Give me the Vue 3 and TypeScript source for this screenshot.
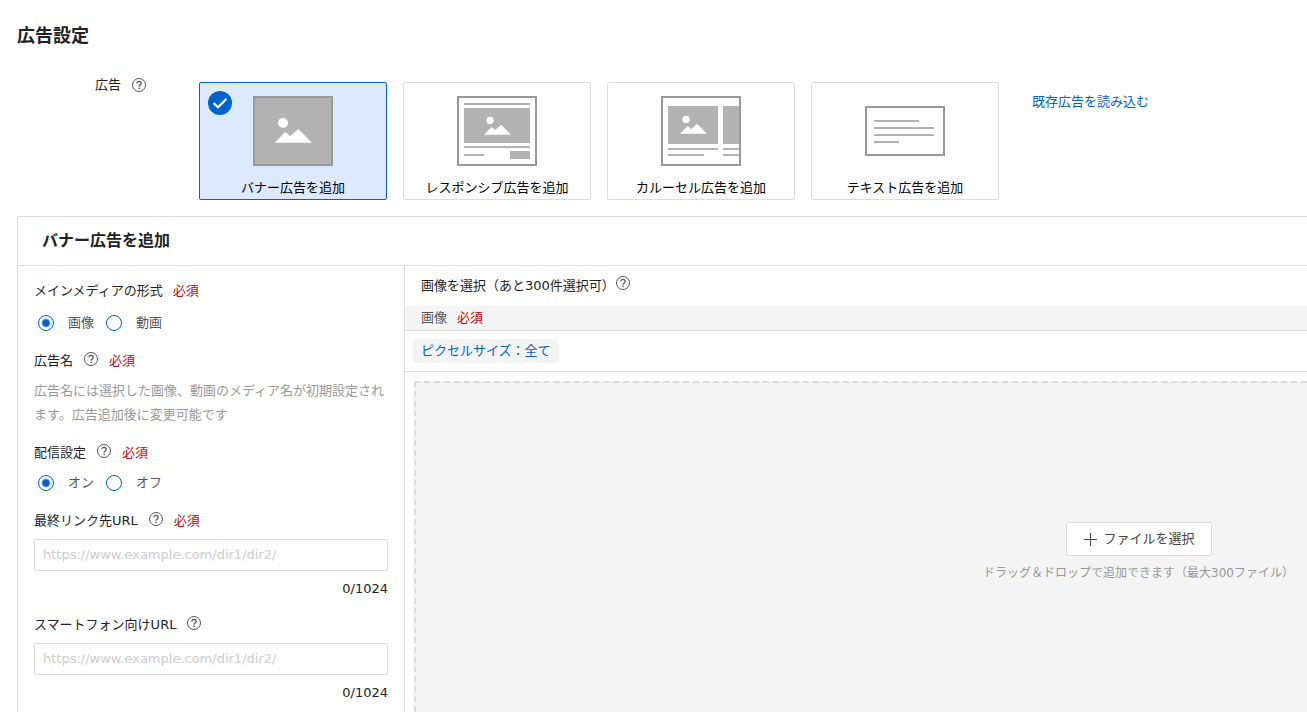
<script setup lang="ts">
import { ref } from 'vue'

interface AdType {
  id: string
  label: string
}

const adTypes: AdType[] = [
  { id: 'banner', label: 'バナー広告を追加' },
  { id: 'responsive', label: 'レスポンシブ広告を追加' },
  { id: 'carousel', label: 'カルーセル広告を追加' },
  { id: 'text', label: 'テキスト広告を追加' },
]

const selectedType = ref('banner')
const media = ref('image')
const delivery = ref('on')
const finalUrl = ref('')
const phoneUrl = ref('')
</script>

<template>
  <svg class="defs" aria-hidden="true">
    <symbol id="help" viewBox="0 0 16 16">
      <circle cx="8" cy="8" r="6.5" fill="none" stroke="#555" />
      <path d="M5.8 6.6c0-1.5 1-2.3 2.2-2.3s2.2.8 2.2 2.1c0 1.6-2.1 1.5-2.1 3.3" fill="none" stroke="#555" stroke-width="1.2" />
      <circle cx="8.1" cy="11.4" r=".8" fill="#555" />
    </symbol>
    <symbol id="scene" viewBox="0 0 38 26">
      <circle cx="9" cy="6" r="5.1" fill="#fff" />
      <path d="M.6 25.8 11.3 15l4.8 4.3L24.3 12 38 25.8z" fill="#fff" />
    </symbol>
  </svg>

  <main class="page">
    <h1 class="title">広告設定</h1>

    <section class="types">
      <div class="types-label">
        <span>広告</span>
        <button class="help" type="button" aria-label="ヘルプ"><svg><use href="#help" /></svg></button>
      </div>
      <div class="cards">
        <button
          v-for="type in adTypes"
          :key="type.id"
          type="button"
          class="card"
          :class="{ selected: selectedType === type.id }"
          :aria-pressed="selectedType === type.id"
          @click="selectedType = type.id"
        >
          <svg v-if="selectedType === type.id" class="badge" viewBox="0 0 24 24">
            <circle cx="12" cy="12" r="12" fill="#0062cc" />
            <path d="M5.6 12l4.4 4.3L18.4 7.9" fill="none" stroke="#fff" stroke-width="2.2" />
          </svg>
          <svg class="thumb" viewBox="0 0 80 70">
            <template v-if="type.id === 'banner'">
              <rect x="1" y="1" width="78" height="68" fill="#b2b2b2" stroke="#999" stroke-width="2" />
              <use href="#scene" x="21" y="21" width="38" height="26" />
            </template>
            <template v-else-if="type.id === 'responsive'">
              <rect x="1" y="1" width="78" height="68" fill="#fff" stroke="#999" stroke-width="2" />
              <path d="M7 7h66v2H7zM7 12h66v35H7zM7 50h66v2H7zM7 58h20v2H7zM53 55h20v8H53z" fill="#b2b2b2" />
              <use href="#scene" x="26.5" y="20" width="27.5" height="19" />
            </template>
            <template v-else-if="type.id === 'carousel'">
              <rect x="1" y="1" width="78" height="68" fill="#fff" stroke="#999" stroke-width="2" />
              <path d="M7 10h50v38H7zM62 10h16v38H62zM7 52h50v2H7zM62 52h16v2H62zM7 58h36v2H7zM62 58h16v2H62z" fill="#b2b2b2" />
              <use href="#scene" x="18.5" y="19" width="27.5" height="19" />
            </template>
            <template v-else>
              <rect x="1" y="11" width="78" height="48" fill="#fff" stroke="#999" stroke-width="2" />
              <path d="M9 24h45v2H9zM9 31h60v2H9zM9 38h60v2H9zM9 45h25v2H9z" fill="#b2b2b2" />
            </template>
          </svg>
          <span>{{ type.label }}</span>
        </button>
      </div>
      <a class="import" href="#">既存広告を読み込む</a>
    </section>

    <section class="panel">
      <h2 class="panel-title">バナー広告を追加</h2>
      <div class="panel-body">
        <form class="form" @submit.prevent>
          <div class="field media" role="radiogroup" aria-labelledby="media-label">
            <div class="field-label">
              <span id="media-label">メインメディアの形式</span>
              <span class="required">必須</span>
            </div>
            <div class="radios">
              <label><input v-model="media" type="radio" name="media" value="image" />画像</label>
              <label><input v-model="media" type="radio" name="media" value="video" />動画</label>
            </div>
          </div>

          <div class="field">
            <div class="field-label">
              <span>広告名</span>
              <button class="help" type="button" aria-label="ヘルプ"><svg><use href="#help" /></svg></button>
              <span class="required">必須</span>
            </div>
            <p class="note">広告名には選択した画像、動画のメディア名が初期設定されます。広告追加後に変更可能です</p>
          </div>

          <div class="field" role="radiogroup" aria-labelledby="delivery-label">
            <div class="field-label">
              <span id="delivery-label">配信設定</span>
              <button class="help" type="button" aria-label="ヘルプ"><svg><use href="#help" /></svg></button>
              <span class="required">必須</span>
            </div>
            <div class="radios">
              <label><input v-model="delivery" type="radio" name="delivery" value="on" />オン</label>
              <label><input v-model="delivery" type="radio" name="delivery" value="off" />オフ</label>
            </div>
          </div>

          <div class="urls">
            <div class="field">
              <div class="field-label">
                <label for="final-url">最終リンク先URL</label>
                <button class="help" type="button" aria-label="ヘルプ"><svg><use href="#help" /></svg></button>
                <span class="required">必須</span>
              </div>
              <input id="final-url" v-model="finalUrl" class="url" type="text" placeholder="https://www.example.com/dir1/dir2/" />
              <div class="count">{{ finalUrl.length }}/1024</div>
            </div>

            <div class="field">
              <div class="field-label">
                <label for="phone-url">スマートフォン向けURL</label>
                <button class="help" type="button" aria-label="ヘルプ"><svg><use href="#help" /></svg></button>
              </div>
              <input id="phone-url" v-model="phoneUrl" class="url" type="text" placeholder="https://www.example.com/dir1/dir2/" />
              <div class="count">{{ phoneUrl.length }}/1024</div>
            </div>
          </div>
        </form>

        <div class="picker">
          <div class="picker-title">
            <span>画像を選択（あと300件選択可）</span>
            <button class="help" type="button" aria-label="ヘルプ"><svg><use href="#help" /></svg></button>
          </div>
          <div class="band">
            <span>画像</span>
            <span class="required">必須</span>
          </div>
          <div class="filters">
            <button class="chip" type="button">ピクセルサイズ：全て</button>
          </div>
          <div class="dropzone">
            <div class="drop-content">
              <button class="choose" type="button">
                <svg viewBox="0 0 14 14"><path d="M7.5 1v13M1 7.5h13" stroke="#444" fill="none" /></svg>
                ファイルを選択
              </button>
              <p class="hint">ドラッグ＆ドロップで追加できます（最大300ファイル）</p>
            </div>
          </div>
        </div>
      </div>
    </section>
  </main>
</template>

<style>
body {
  margin: 0;
  background: #fff;
}
</style>

<style scoped>
* {
  box-sizing: border-box;
}
.defs {
  position: absolute;
  width: 0;
  height: 0;
}
.page {
  display: flex;
  flex-direction: column;
  min-height: 100vh;
  padding: 20px 0 0 17px;
  overflow: hidden;
  color: #222;
  font-family: "DejaVu Sans", "Noto Sans CJK JP", sans-serif;
  font-size: 13px;
  line-height: 24px;
}
button,
input {
  margin: 0;
  font: inherit;
  color: inherit;
}
button {
  padding: 0;
  border: 0;
  background: none;
  cursor: pointer;
}
.title {
  margin: 0;
  font-size: 18px;
  line-height: 32px;
}
.types {
  display: flex;
  align-items: flex-start;
  padding-top: 30px;
}
.types-label {
  display: flex;
  flex: none;
  justify-content: flex-end;
  align-items: center;
  gap: 10px;
  width: 130px;
  margin: -9px 52px 0 0;
}
.help {
  flex: none;
  width: 16px;
  height: 16px;
}
.help svg {
  display: block;
  width: 16px;
  height: 16px;
}
.cards {
  display: flex;
  gap: 16px;
}
.card {
  position: relative;
  display: flex;
  flex-direction: column;
  align-items: center;
  width: 188px;
  height: 118px;
  padding: 13px 0 0;
  border: 1px solid #ddd;
  border-radius: 2px;
  color: #000;
}
.card.selected {
  border-color: #0062cc;
  background: #dce9fe;
}
.card span {
  margin-top: 10px;
}
.badge {
  position: absolute;
  top: 8px;
  left: 8px;
  width: 24px;
  height: 24px;
}
.thumb {
  flex: none;
  width: 80px;
  height: 70px;
}
.import {
  margin: 8px 0 0 33px;
  color: #0062cc;
  text-decoration: none;
}
.panel {
  display: flex;
  flex: 1;
  flex-direction: column;
  margin-top: 16px;
  border: 1px solid #ddd;
  border-width: 1px 0 0 1px;
  border-radius: 2px 0 0 0;
}
.panel-title {
  margin: 0;
  padding: 0 24px;
  border-bottom: 1px solid #ddd;
  font-size: 16px;
  line-height: 48px;
}
.panel-body {
  display: flex;
  flex: 1;
}
.form {
  display: flex;
  flex: none;
  flex-direction: column;
  gap: 14px;
  width: 387px;
  padding: 13px 16px 0;
  border-right: 1px solid #ddd;
}
.field {
  display: flex;
  flex-direction: column;
  gap: 6px;
}
.field.media {
  gap: 8px;
}
.urls {
  display: flex;
  flex-direction: column;
  gap: 12px;
}
.field-label {
  display: flex;
  align-items: center;
  gap: 10px;
}
.field-label .help {
  margin-bottom: 4px;
}
.required {
  color: #c9000e;
}
.radios {
  display: flex;
  gap: 12px;
  padding-left: 4px;
  color: #555;
}
.radios label {
  display: flex;
  align-items: center;
  gap: 14px;
}
.radios input {
  flex: none;
  width: 16px;
  height: 16px;
  border: 1px solid #0062cc;
  border-radius: 50%;
  background: #fff;
  appearance: none;
}
.radios input:checked {
  background: radial-gradient(circle, #0062cc 3px, #fff 5px);
}
.note {
  margin: 0;
  color: #999;
}
.url {
  width: 100%;
  height: 32px;
  padding: 0 8px 2px;
  border: 1px solid #ddd;
  border-radius: 2px;
  background: #fff;
}
.url::placeholder {
  color: #ccc;
  opacity: 1;
}
.count {
  text-align: right;
}
.picker {
  display: flex;
  flex: 1;
  flex-direction: column;
  min-width: 0;
}
.picker-title {
  display: flex;
  align-items: center;
  height: 40px;
  padding-left: 16px;
}
.picker-title .help {
  margin-bottom: 6px;
}
.band {
  display: flex;
  gap: 10px;
  padding-left: 16px;
  border-bottom: 1px solid #ddd;
  background: #f4f4f4;
  color: #555;
}
.band .required {
  color: #c9000e;
}
.filters {
  padding: 8px;
  border-bottom: 1px solid #ddd;
}
.chip {
  display: block;
  padding: 0 8px;
  border-radius: 2px;
  background: #f4f4f4;
  color: #0062cc;
}
.dropzone {
  display: flex;
  flex: 1;
  justify-content: flex-end;
  margin: 9px 0 0 9px;
  padding: 139px 13px 0;
  border: 2px dashed #ddd;
  border-width: 2px 0 0 2px;
  background: #f4f4f4;
}
.drop-content {
  display: flex;
  flex-direction: column;
  align-items: center;
  gap: 5px;
}
.choose {
  display: flex;
  align-items: center;
  gap: 7px;
  height: 34px;
  padding: 0 16px;
  border: 1px solid #ddd;
  border-radius: 2px;
  background: #fff;
  color: #444;
}
.choose svg {
  width: 14px;
  height: 14px;
}
.hint {
  margin: 0;
  color: #999;
  font-size: 12px;
  white-space: nowrap;
}
</style>
